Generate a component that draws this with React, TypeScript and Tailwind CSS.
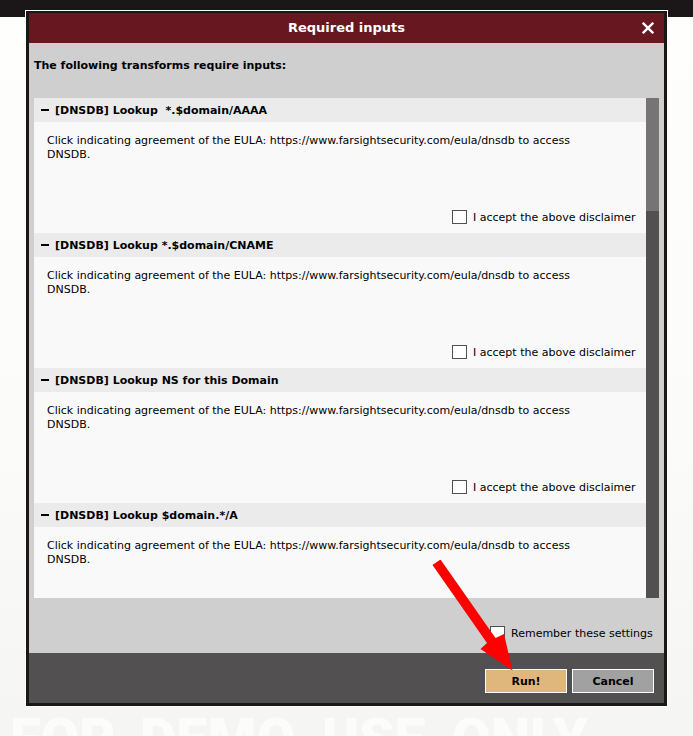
import { useState } from "react";

const EULA =
  "Click indicating agreement of the EULA: https://www.farsightsecurity.com/eula/dnsdb to access DNSDB.";

const transforms = [
  { title: "[DNSDB] Lookup  *.$domain/AAAA", disclaimer: true },
  { title: "[DNSDB] Lookup *.$domain/CNAME", disclaimer: true },
  { title: "[DNSDB] Lookup NS for this Domain", disclaimer: true },
  { title: "[DNSDB] Lookup $domain.*/A", disclaimer: false },
];

function CheckBox({ id }: { id: string }) {
  return (
    <input
      id={id}
      type="checkbox"
      className="h-3.5 w-[15px] appearance-none border border-[#525050] bg-white checked:bg-[#525050]"
    />
  );
}

function TransformSection({
  title,
  disclaimer,
  index,
}: {
  title: string;
  disclaimer: boolean;
  index: number;
}) {
  const [open, setOpen] = useState(true);
  return (
    <section>
      <h2 className="bg-[#ebebeb] font-bold">
        <button
          type="button"
          aria-expanded={open}
          onClick={() => setOpen(!open)}
          className="flex h-6 w-full items-center gap-1.5 pl-[7px] text-left"
        >
          <span className="h-0.5 w-2 bg-black" />
          <span className="pt-0.5 whitespace-pre">{title}</span>
        </button>
      </h2>
      {open && (
        <div className="flex min-h-[71px] flex-col pt-3">
          <p className="pr-10 pl-[13px] leading-3.5">{EULA}</p>
          {disclaimer && (
            <label
              htmlFor={`accept-${index}`}
              className="mt-[47px] flex items-center justify-end gap-1.5 pr-1.5 pb-2"
            >
              <CheckBox id={`accept-${index}`} />
              <span className="min-w-[167px] pt-0.5 leading-3.5">I accept the above disclaimer</span>
            </label>
          )}
        </div>
      )}
    </section>
  );
}

function Arrow() {
  return (
    <svg
      viewBox="0 0 82 112"
      className="pointer-events-none absolute right-[154px] bottom-[34px] h-28 w-[82px]"
      aria-hidden="true"
    >
      <path d="M1.5 5 9.5 -.5 64.5 78 73 74 81.500 110.500 49.500 89 56 83Z" fill="#f00" />
    </svg>
  );
}

export default function App() {
  return (
    <div className="flex h-screen min-h-[736px] flex-col overflow-hidden bg-linear-to-b from-[#fefefc] via-[#fcfcfa] to-[#f5f5f4] font-['DejaVu_Sans',sans-serif] text-[11px] text-black">
      <div className="h-[17px] shrink-0 bg-[#1b1718]" />
      <main
        role="dialog"
        aria-labelledby="dialog-title"
        className="relative mx-[25px] -mt-[7px] shrink-0 border border-white"
      >
        <div className="border-3 border-t-2 border-[#1b1718]">
          <header className="grid h-[30px] grid-cols-[1fr_auto_1fr] items-center bg-[#67171f] text-white">
            <h1 id="dialog-title" className="col-start-2 text-[13px] font-bold">
              Required inputs
            </h1>
            <button type="button" aria-label="Close" className="mr-2.5 justify-self-end">
              <svg viewBox="0 0 12 12" className="size-3" stroke="currentColor" strokeWidth="2.4">
                <path d="M.7.7 11.3 11.3M11.3.7.7 11.3" />
              </svg>
            </button>
          </header>

          <div className="bg-[#cfcfcf] px-[5px] pt-4 pb-3">
            <p className="leading-3.5 font-bold">The following transforms require inputs:</p>
            <div className="mt-[25px] flex h-[500px]">
              <div className="flex-1 overflow-hidden bg-[#f9f9f9]">
                {transforms.map((t, i) => (
                  <TransformSection key={t.title} {...t} index={i} />
                ))}
              </div>
              <div className="w-[13px] bg-[#525050]">
                <div className="h-[113px] bg-[#777475]" />
              </div>
            </div>
            <label htmlFor="remember" className="mt-[27px] flex items-center justify-end gap-1.5">
              <CheckBox id="remember" />
              <span className="min-w-[148px] pt-0.5 leading-3.5">Remember these settings</span>
            </label>
          </div>

          <footer className="flex h-[50px] items-center justify-end gap-[5px] bg-[#525050] px-2.5 pt-1.5">
            <button type="button" className="h-6 w-[82px] border border-white bg-[#dfb67c] pt-0.5 font-bold">
              Run!
            </button>
            <button type="button" className="h-6 w-[82px] border border-white bg-[#a1a1a1] pt-0.5 font-bold">
              Cancel
            </button>
          </footer>
        </div>
        <Arrow />
      </main>
      <p className="mt-1 grid shrink-0 grid-cols-[130px_182px_130px_auto] pl-2.5 font-['Roboto',sans-serif] text-[56px] leading-[56px] font-black text-[#fcfcfa]">
        <span>FOR</span>
        <span>DEMO</span>
        <span>USE</span>
        <span>ONLY</span>
      </p>
    </div>
  );
}
